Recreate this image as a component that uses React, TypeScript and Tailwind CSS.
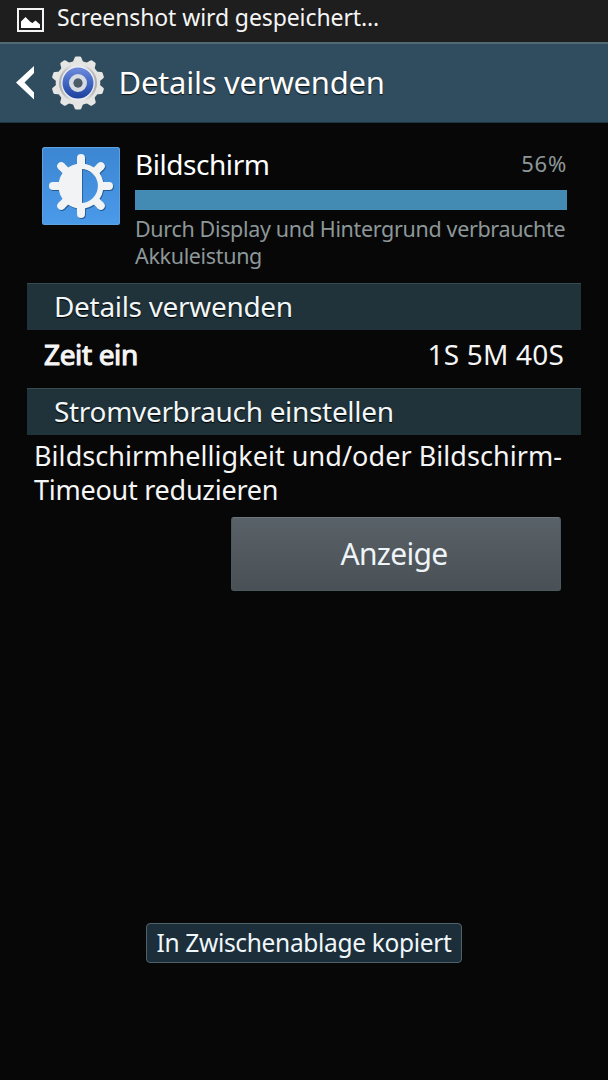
import React from 'react';

const teeth = [0, 36, 72, 108, 144, 180, 216, 252, 288, 324];
const rays = [0, 45, 90, 135, 180, 225, 270, 315];

function PictureIcon() {
  return (
    <svg className="block h-6 w-[27px] shrink-0" viewBox="0 0 27 24">
      <rect x="1" y="1" width="25" height="22" fill="none" stroke="#f4f4f4" strokeWidth="2" />
      <path d="M4 20V13.500L8.500 9 13.500 14 15.500 15 18.500 12.500 23 16.500V20z" fill="#fff" />
    </svg>
  );
}

function BackIcon() {
  return (
    <svg className="block h-[34px] w-[19px] shrink-0" viewBox="0 0 19 34">
      <path d="M18 0v7L8.500 16.500 18 26.500V33.500L0 16.500z" fill="#fff" />
    </svg>
  );
}

function GearIcon() {
  return (
    <svg className="block h-[54px] w-[54px] shrink-0" viewBox="-27 -27 54 54">
      <defs>
        <linearGradient id="gearBlue" x1="0" y1="0" x2="0" y2="1">
          <stop offset="0" stopColor="#6f8bdc" />
          <stop offset="0.5" stopColor="#4166c2" />
          <stop offset="1" stopColor="#1d429d" />
        </linearGradient>
        <linearGradient id="gearRim" x1="0" y1="0" x2="1" y2="0">
          <stop offset="0" stopColor="#aaaaac" />
          <stop offset="0.35" stopColor="#e6e6e6" />
          <stop offset="0.65" stopColor="#e6e6e6" />
          <stop offset="1" stopColor="#aaaaac" />
        </linearGradient>
      </defs>
      <g fill="#e6e6e4">
        {teeth.map((a) => (
          <path key={a} transform={`rotate(${a})`} d="M-5.500-20L-3.300-25.500Q-3-26.500-1.800-26.500H1.800Q3-26.500 3.300-25.500L5.500-20z" />
        ))}
      </g>
      <circle r="22.300" fill="#e4e4e2" />
      <circle r="19" fill="url(#gearRim)" />
      <circle r="16.800" fill="#eceff6" />
      <circle r="15.500" fill="url(#gearBlue)" />
      <circle r="6.700" fill="none" stroke="#d6dbe2" strokeWidth="4.600" />
      <circle r="4.500" fill="#4b5b68" />
    </svg>
  );
}

function BrightnessIcon() {
  const shape = (
    <>
      {rays.map((a) => (
        <line key={a} x1="0" y1="-21" x2="0" y2="-28" transform={`rotate(${a})`} strokeWidth="8" />
      ))}
      {rays.map((a) => (
        <circle key={`tip${a}`} cy="-28" r="4" transform={`rotate(${a})`} stroke="none" />
      ))}
      <circle r="19.700" fill="none" strokeWidth="5.600" />
      <path d="M1-20V20A20 20 0 0 1 1-20z" stroke="none" />
    </>
  );
  return (
    <svg className="block h-[78px] w-[78px] shrink-0" viewBox="-39 -39 78 78">
      <defs>
        <linearGradient id="tile" x1="0" y1="0" x2="0" y2="1">
          <stop offset="0" stopColor="#3c86d2" />
          <stop offset="1" stopColor="#4a9aea" />
        </linearGradient>
      </defs>
      <rect x="-39" y="-39" width="78" height="78" rx="2.500" fill="#5ca2e2" />
      <rect x="-38" y="-38" width="76" height="76" rx="2" fill="url(#tile)" />
      <g transform="translate(0.800 1)" stroke="#235a92" fill="#235a92">{shape}</g>
      <g stroke="#f1f3f4" fill="#f1f3f4">{shape}</g>
    </svg>
  );
}

function SectionTitle({ children }: { children: React.ReactNode }) {
  return (
    <h2 className="h-[47px] border-t border-[#344b50] bg-[#20323a] pl-[27px] text-[28px] leading-[45px] tracking-[-0.32px] text-[#f2f7f8] [text-shadow:0_1px_1px_#000]">
      {children}
    </h2>
  );
}

export default function App() {
  return (
    <div className="flex h-[1080px] w-[608px] flex-col overflow-hidden whitespace-nowrap bg-[#070707] font-['Noto_Sans',sans-serif] text-[#f5f5f5]">
      <div className="flex h-[42px] shrink-0 items-start bg-[#1e1e1e] pl-[17px]">
        <div className="pt-2">
          <PictureIcon />
        </div>
        <span className="ml-[13px] text-[23px] leading-[34px] tracking-[-0.1px]">Screenshot wird gespeichert...</span>
      </div>
      <header className="flex h-[81px] shrink-0 items-center border-b border-t-2 border-b-[#1d3441] border-t-[#526a76] bg-[#304d5f] pl-4">
        <BackIcon />
        <div className="mb-px ml-[15.5px]">
          <GearIcon />
        </div>
        <h1 className="ml-[14px] pb-[2px] text-[31px] leading-[40px] tracking-[-0.25px] text-white [text-shadow:0_1px_1px_#111]">Details verwenden</h1>
      </header>

      <main className="flex flex-col px-[27px]">
        <section className="flex h-[160px] pl-[15px] pt-6">
          <BrightnessIcon />
          <div className="ml-[15px] flex w-[432px] flex-col">
            <div className="flex h-[43px] items-start justify-between">
              <span className="text-[28px] leading-[35px] tracking-[-0.45px] text-white">Bildschirm</span>
              <span className="text-[22px] leading-[33px] tracking-[0.8px] text-[#8d9799]">56%</span>
            </div>
            <div className="h-5 bg-[#448bb4]" />
            <p className="mt-[6px] text-[21.5px] leading-[26.5px] tracking-[-0.34px] text-[#8d9799]">
              Durch Display und Hintergrund verbrauchte
              <br />
              Akkuleistung
            </p>
          </div>
        </section>

        <SectionTitle>Details verwenden</SectionTitle>
        <div className="flex h-[58px] items-start justify-between px-[17px] pt-1">
          <span className="text-[28px] leading-[40px] tracking-[-0.35px] [-webkit-text-stroke:1.1px_#f5f5f5]">Zeit ein</span>
          <span className="text-[28px] leading-[40px] tracking-[0.2px]">1S 5M 40S</span>
        </div>
        <SectionTitle>Stromverbrauch einstellen</SectionTitle>
        <p className="mt-1 pl-[7px] text-[27px] leading-[33.5px] tracking-[0.05px]">
          Bildschirmhelligkeit und/oder Bildschirm-
          <br />
          <span className="tracking-[-0.25px]">Timeout reduzieren</span>
        </p>
        <button className="mr-[20px] mt-[11px] flex h-[74px] w-[330px] items-center justify-center self-end rounded-[3px] border border-[#4d5960] border-t-[#6b757b] bg-linear-to-b from-[#596268] to-[#495056] pr-[4px] text-[30px] leading-[40px] tracking-[-0.7px] text-[#eef4f7]">
          Anzeige
        </button>
      </main>

      <div className="mb-[117px] mt-auto flex h-[40px] w-[316px] justify-center self-center rounded-[4px] border border-[#4f6267] bg-[#1c2e3a] text-[24.5px] leading-[37px] tracking-[-0.33px] text-[#f0f7fa]">
        In Zwischenablage kopiert
      </div>
    </div>
  );
}
